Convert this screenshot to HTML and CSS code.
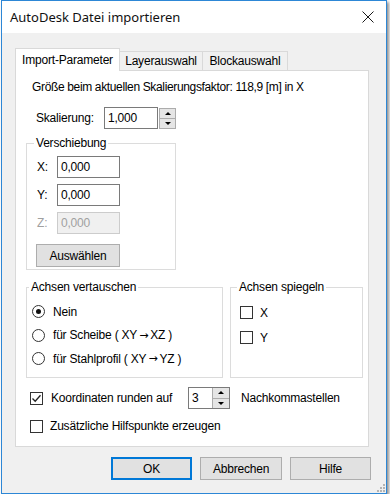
FILE: index.html
```html
<!DOCTYPE html>
<html lang="de">
  <head>
    <meta charset="UTF-8" />
    <title>AutoDesk Datei importieren</title>
    <link rel="stylesheet" href="styles.css">
  </head>
  <body>
    <div class="window">
      <div class="titlebar">
        <span class="title">AutoDesk Datei importieren</span>
        <svg class="close" width="12" height="12" viewBox="0 0 12 12">
          <path d="M0.5 0.5 L11.5 11.5 M11.5 0.5 L0.5 11.5" stroke="#1a1a1a" stroke-width="1" fill="none"/>
        </svg>
      </div>
      <div class="client">
        <div class="tabs">
          <div class="tab active">Import-Parameter</div>
          <div class="tab second">Layerauswahl</div>
          <div class="tab third">Blockauswahl</div>
        </div>
        <div class="panel">
          <p class="info">Größe beim aktuellen Skalierungsfaktor: 118,9 [m] in X</p>
          <div class="scaleRow">
            <span class="scaleLabel">Skalierung:</span>
            <span class="edit scaleEdit">1,000</span>
            <span class="spin">
              <span class="spinBtn"><i class="up"></i></span>
              <span class="spinBtn"><i class="down"></i></span>
            </span>
          </div>

          <fieldset class="group shift">
            <legend>Verschiebung</legend>
            <div class="coord">
              <span class="coordLabel">X:</span><span class="edit coordEdit">0,000</span>
            </div>
            <div class="coord">
              <span class="coordLabel">Y:</span><span class="edit coordEdit">0,000</span>
            </div>
            <div class="coord disabled">
              <span class="coordLabel">Z:</span><span class="edit coordEdit">0,000</span>
            </div>
            <button class="btn pick">Auswählen</button>
          </fieldset>

          <div class="groups">
            <fieldset class="group swap">
              <legend>Achsen vertauschen</legend>
              <div class="option"><span class="radio checked"></span>Nein</div>
              <div class="option"><span class="radio"></span>für Scheibe ( XY<span class="arrow">→</span>XZ )</div>
              <div class="option"><span class="radio"></span>für Stahlprofil ( XY<span class="arrow">→</span>YZ )</div>
            </fieldset>
            <fieldset class="group mirror">
              <legend>Achsen spiegeln</legend>
              <div class="option tall"><span class="check"></span>X</div>
              <div class="option tall"><span class="check"></span>Y</div>
            </fieldset>
          </div>

          <div class="roundRow">
            <span class="check checked">
              <svg width="11" height="11" viewBox="0 0 11 11"><path d="M1.5 5.5 L4.2 8.3 L9.5 2.2" stroke="#222" stroke-width="1.3" fill="none"/></svg>
            </span>
            <span class="roundLabel">Koordinaten runden auf</span>
            <span class="digits">
              <span class="digitsText">3</span>
              <span class="spin inner">
                <span class="spinBtn"><i class="up"></i></span>
                <span class="spinBtn"><i class="down"></i></span>
              </span>
            </span>
            <span class="after">Nachkommastellen</span>
          </div>
          <div class="extraRow">
            <span class="check"></span>
            <span>Zusätzliche Hilfspunkte erzeugen</span>
          </div>
        </div>

        <div class="buttons">
          <button class="btn default">OK</button>
          <button class="btn wide">Abbrechen</button>
          <button class="btn">Hilfe</button>
        </div>
      </div>
      <svg class="grip" width="8" height="8" viewBox="0 0 8 8">
        <rect x="6" y="0" width="2" height="2" fill="#b4b4b4"/>
        <rect x="3" y="3" width="2" height="2" fill="#b4b4b4"/>
        <rect x="6" y="3" width="2" height="2" fill="#b4b4b4"/>
        <rect x="0" y="6" width="2" height="2" fill="#b4b4b4"/>
        <rect x="3" y="6" width="2" height="2" fill="#b4b4b4"/>
        <rect x="6" y="6" width="2" height="2" fill="#b4b4b4"/>
      </svg>
    </div>
  </body>
</html>
```

FILE: styles.css
```css
html, body {
  margin: 0;
  padding: 0;
  background: #fff;
}
body {
  font-family: 'Liberation Sans', Arial, sans-serif;
  font-size: 12px;
  letter-spacing: -0.2px;
  color: #000;
}
.window {
  position: relative;
  margin-left: 1px;
  width: 386px;
  height: 494px;
  box-sizing: border-box;
  border: 1px solid #2d87d6;
  box-shadow: 2px 2px 3px rgba(0, 0, 0, 0.45);
  display: flex;
  flex-direction: column;
}
.titlebar {
  height: 32px;
  background: #fff;
  display: flex;
  align-items: center;
  padding-left: 8px;
}
.title {
  font-family: 'Noto Sans', sans-serif;
  font-size: 13px;
  letter-spacing: 0;
  color: #111;
}
.close {
  margin-left: auto;
  margin-right: 12px;
}
.client {
  flex: 1;
  background: #f0f0f0;
  padding: 15px 0 0 13px;
}

/* tabs */
.tabs {
  display: flex;
  align-items: flex-end;
  height: 23px;
  margin-bottom: -1px;
  position: relative;
  z-index: 1;
}
.tab {
  box-sizing: border-box;
  height: 19px;
  margin-bottom: 1px;
  border: 1px solid #d9d9d9;
  border-bottom: none;
  background: #f0f0f0;
  display: flex;
  align-items: center;
  justify-content: center;
}
.tab.active {
  width: 105px;
  height: 23px;
  margin-bottom: 0;
  background: #fff;
}
.tab.second {
  width: 83px;
  border-left: none;
}
.tab.third {
  width: 85px;
  border-left: none;
}
.panel {
  width: 354px;
  height: 377px;
  box-sizing: border-box;
  border: 1px solid #d9d9d9;
  background: #fff;
}
.info {
  margin: 8px 0 0 16px;
  line-height: 16px;
  letter-spacing: -0.35px;
}

/* edits and spinners */
.edit {
  box-sizing: border-box;
  height: 22px;
  border: 1px solid #7a7a7a;
  background: #fff;
  padding-left: 3px;
  display: flex;
  align-items: center;
}
.spin {
  box-sizing: border-box;
  width: 17px;
  height: 21px;
  display: flex;
  flex-direction: column;
  border: 1px solid #acacac;
}
.spinBtn {
  flex: 1;
  background: #e5e5e5;
  display: flex;
  align-items: center;
  justify-content: center;
}
.spinBtn + .spinBtn {
  border-top: 1px solid #acacac;
}
.up, .down {
  width: 0;
  height: 0;
  border-left: 3px solid transparent;
  border-right: 3px solid transparent;
}
.up {
  border-bottom: 3px solid #000;
}
.down {
  border-top: 3px solid #000;
}
.scaleRow {
  display: flex;
  align-items: center;
  margin-top: 12px;
  padding-left: 20px;
  height: 22px;
}
.scaleLabel {
  width: 68px;
}
.scaleEdit {
  width: 54px;
}
.scaleRow .spin {
  margin-left: 1px;
}

/* group boxes */
.group {
  box-sizing: border-box;
  border: 1px solid #dcdcdc;
  margin: 0;
  padding: 0 0 0 9px;
}
.group legend {
  padding: 0 2px;
  margin-left: -3px;
  line-height: 16px;
}
.shift {
  width: 150px;
  margin: 6px 0 0 10px;
  padding: 5px 0 2px 10px;
}
.coord {
  display: flex;
  align-items: center;
  height: 22px;
  margin-bottom: 6px;
}
.coord + .coord {
  margin-top: 1px;
}
.coordLabel {
  width: 20px;
}
.coordEdit {
  width: 63px;
}
.coord.disabled {
  color: #a0a0a0;
}
.coord.disabled .edit {
  background: #f0f0f0;
  border-color: #cccccc;
}
.btn {
  box-sizing: border-box;
  font: inherit;
  letter-spacing: inherit;
  color: #000;
  background: #e1e1e1;
  border: 1px solid #adadad;
  height: 23px;
  width: 81px;
  padding: 0;
}
.pick {
  display: block;
  width: 84px;
  margin: 10px 0 0 -1px;
}
.groups {
  display: flex;
  gap: 7px;
  margin: 9px 0 0 10px;
}
.swap {
  width: 197px;
  height: 99px;
  padding: 5px 0 0 5px;
}
.mirror {
  width: 133px;
  height: 99px;
  padding: 5px 0 0 9px;
}
.option {
  display: flex;
  align-items: center;
  height: 23.5px;
}
.option.tall {
  height: 25px;
}
.arrow {
  font-family: 'DejaVu Sans', sans-serif;
  font-size: 11px;
  margin: 0 2px;
}
.radio {
  box-sizing: border-box;
  width: 13px;
  height: 13px;
  border: 1px solid #333;
  border-radius: 50%;
  margin-right: 8px;
  display: flex;
  align-items: center;
  justify-content: center;
}
.radio.checked::after {
  content: '';
  width: 5px;
  height: 5px;
  border-radius: 50%;
  background: #111;
}
.check {
  box-sizing: border-box;
  width: 13px;
  height: 13px;
  border: 1px solid #333;
  background: #fff;
  margin-right: 7px;
  display: flex;
  align-items: center;
  justify-content: center;
}
.roundRow {
  display: flex;
  align-items: center;
  height: 22px;
  margin: 9px 0 0 14px;
}
.roundRow .check {
  margin-right: 8px;
}
.roundLabel {
  width: 137px;
}
.digits {
  box-sizing: border-box;
  width: 42px;
  height: 22px;
  border: 1px solid #7a7a7a;
  display: flex;
  align-items: stretch;
}
.digitsText {
  flex: 1;
  padding-left: 3px;
  display: flex;
  align-items: center;
}
.spin.inner {
  height: auto;
  width: 17px;
  border-width: 0 0 0 1px;
}
.after {
  margin-left: 11px;
}
.extraRow {
  display: flex;
  align-items: center;
  height: 22px;
  margin: 6px 0 0 14px;
}
.buttons {
  display: flex;
  gap: 8px;
  margin-top: 10px;
  padding-left: 96px;
}
.btn.default {
  border-color: #0078d7;
  box-shadow: inset 0 0 0 1px #0078d7;
}
.btn.wide {
  width: 82px;
}
.grip {
  position: absolute;
  right: 1px;
  bottom: 1px;
}
```
